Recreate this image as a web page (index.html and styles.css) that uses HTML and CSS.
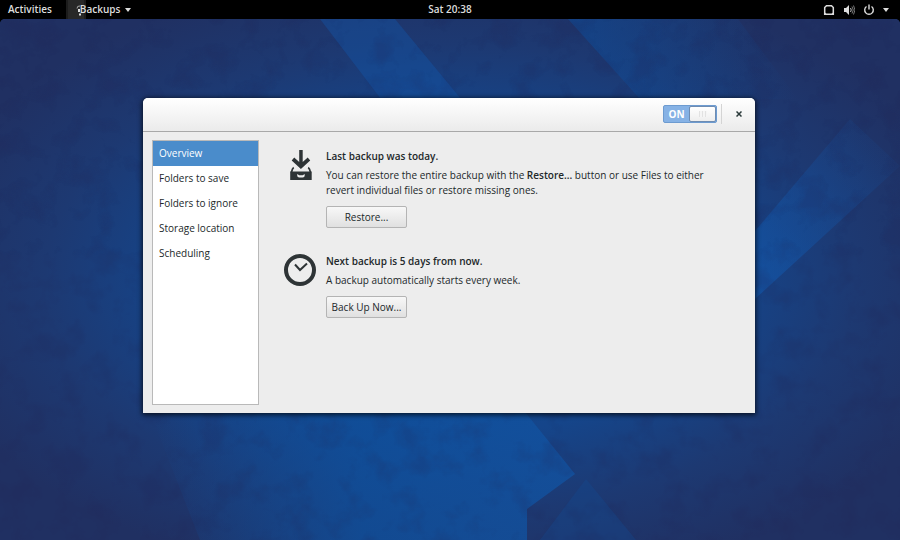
FILE: index.html
```html
<!DOCTYPE html>
<html lang="en">
<head>
    <meta charset="UTF-8">
    <meta name="viewport" content="width=device-width, initial-scale=1.0">
    <title>Backups</title>
    <link rel="stylesheet" href="styles.css">
</head>
<body>
    <header class="topbar">
        <div class="topbar-left">
            <button type="button" class="activities">Activities</button>
            <button type="button" class="app-menu">
                <svg class="app-icon" viewBox="0 0 20 19" aria-hidden="true">
                    <path d="M0 0h20v19H0z" fill="#1c1c1c"/>
                    <path d="M2 0h16v19H2z" fill="#282828"/>
                    <path d="M11 8.500q0-3 3-2.500" fill="none" stroke="#aaa" stroke-width="1"/>
                    <path d="M13 9v3M13 14.500h2" stroke="#ddd" stroke-width="2"/>
                </svg>
                <span class="app-name">Backups</span>
                <svg class="arrow" viewBox="0 0 6 4" aria-hidden="true"><path d="M0 0h6L3 4z" fill="#ddd"/></svg>
            </button>
        </div>
        <time class="clock">Sat 20:38</time>
        <button type="button" class="status" aria-label="System menu">
            <svg class="status-icon" viewBox="0 0 12 12" aria-hidden="true">
                <path d="M3.500 1.700h5l1.800 1.800v6.800H1.700V3.500z" fill="none" stroke="#ddd" stroke-width="1.500"/>
                <path d="M1 11V7.500L4.500 11zM11 11V7.500L7.500 11z" fill="#ddd"/>
            </svg>
            <svg class="status-icon" viewBox="0 0 12 12" aria-hidden="true">
                <path d="M1 4h2l3-3v10L3 8H1z" fill="#ddd"/>
                <path d="M7.500 4q1.500 2 0 4" fill="none" stroke="#bbb"/>
                <path d="M9 2.500q2.500 3.500 0 7M10.500 1.500q3 4.500 0 9" fill="none" stroke="#777"/>
            </svg>
            <svg class="status-icon" viewBox="0 0 12 12" aria-hidden="true">
                <path d="M3.500 2.500a4.300 4.300 0 1 0 5 0M6 .5v5" fill="none" stroke="#ddd" stroke-width="1.400"/>
            </svg>
            <svg class="arrow" viewBox="0 0 6 4" aria-hidden="true"><path d="M0 0h6L3 4z" fill="#ddd"/></svg>
        </button>
    </header>

    <main class="desktop">
        <svg class="wallpaper" viewBox="0 0 900 521" preserveAspectRatio="none" aria-hidden="true">
            <defs>
                <radialGradient id="glow" cx="0.5" cy="0.5" r="0.6">
                    <stop offset="0" stop-color="#104c98"/>
                    <stop offset="0.5" stop-color="#15458a"/>
                    <stop offset="0.75" stop-color="#1d3972"/>
                    <stop offset="1" stop-color="#203062"/>
                </radialGradient>
                <linearGradient id="beam" x1="0" y1="1" x2="1" y2="0">
                    <stop offset="0" stop-color="#1258ad" stop-opacity="0.9"/>
                    <stop offset="1" stop-color="#1258ad" stop-opacity="0"/>
                </linearGradient>
                <linearGradient id="base" x1="0" y1="0" x2="1" y2="0">
                    <stop offset="0" stop-color="#0f4f9b" stop-opacity="0"/>
                    <stop offset="0.5" stop-color="#0f4f9b"/>
                    <stop offset="1" stop-color="#1252a0"/>
                </linearGradient>
                <linearGradient id="edge" x1="0" y1="0" x2="1" y2="0">
                    <stop offset="0" stop-color="#0f4c98"/>
                    <stop offset="1" stop-color="#0f4c98" stop-opacity="0"/>
                </linearGradient>
                <filter id="grain" x="0" y="0" width="100%" height="100%" color-interpolation-filters="sRGB">
                    <feTurbulence type="fractalNoise" baseFrequency="0.035" numOctaves="5" seed="8"/>
                    <feColorMatrix values="0 0 0 0 0.13  0 0 0 0 0.13  0 0 0 0 0.32  3.500 0 0 0 -1.700"/>
                </filter>
            </defs>
            <path d="M0 0h900v521H0z" fill="url(#glow)"/>
            <path d="M320 0h75l66 80h-80z" fill="#1258ad" opacity="0.400"/>
            <path d="M568 0h170l60 80H640z" fill="url(#edge)" opacity="0.600"/>
            <path d="M755 212l95-112 50 47-145 133z" fill="url(#beam)" opacity="0.700"/>
            <path d="M150 393h375l50 62-48 35v31H200z" fill="url(#base)" opacity="0.800"/>
            <path d="M586 460l50 61H540z" fill="#15488f" opacity="0.400"/>
            <path d="M0 0h900v521H0z" filter="url(#grain)" opacity="0.160"/>
        </svg>

        <section class="window" aria-label="Backups">
            <div class="titlebar">
                <label class="switch">
                    <input type="checkbox" class="switch-input" aria-label="Automatic backups" checked>
                    <span class="switch-text">ON</span>
                    <span class="switch-knob"></span>
                </label>
                <span class="divider"></span>
                <button type="button" class="close" aria-label="Close">
                    <svg class="close-icon" viewBox="0 0 6 6" aria-hidden="true"><path d="M.5.5l5 5M5.500.5l-5 5" stroke="#2b3a3a" stroke-width="1.500"/></svg>
                </button>
            </div>

            <div class="content">
                <nav class="sidebar">
                    <a href="#overview" class="item selected">Overview</a>
                    <a href="#save" class="item">Folders to save</a>
                    <a href="#ignore" class="item">Folders to ignore</a>
                    <a href="#storage" class="item">Storage location</a>
                    <a href="#scheduling" class="item">Scheduling</a>
                </nav>

                <div class="overview" id="overview">
                    <div class="row">
                        <svg class="row-icon" viewBox="0 0 34 34" aria-hidden="true">
                            <path d="M16.200 1h3.500v12l5-4.500 2.500 3-9.300 8.500-9.200-8.500 2.500-3 5 4.500z" fill="#2e3436"/>
                            <path d="M10.700 18.500q-1.500 1-2.300 5M25.200 18.500q1.500 1 2.300 5" fill="none" stroke="#2e3436" stroke-width="1.700"/>
                            <path d="M7.200 22.500h21.500v8.500h-21.500z" fill="#2e3436"/>
                            <path d="M14.200 25v1.500q0 2 2 2h3.500q2 0 2-2V25l-2 1.300h-3.500z" fill="#ededed"/>
                        </svg>
                        <div class="row-body">
                            <h2>Last backup was today.</h2>
                            <p>You can restore the entire backup with the <b>Restore...</b> button or use Files to either revert individual files or restore missing ones.</p>
                            <button type="button" class="btn">Restore...</button>
                        </div>
                    </div>
                    <div class="row">
                        <svg class="row-icon" viewBox="0 0 34 34" aria-hidden="true">
                            <circle cx="17" cy="16" r="14" fill="none" stroke="#2e3436" stroke-width="4"/>
                            <path d="M12 10.500l5 5.500 7-6.500" fill="none" stroke="#2e3436" stroke-width="2"/>
                        </svg>
                        <div class="row-body">
                            <h2>Next backup is 5 days from now.</h2>
                            <p>A backup automatically starts every week.</p>
                            <button type="button" class="btn">Back Up Now...</button>
                        </div>
                    </div>
                </div>
            </div>
        </section>
    </main>
</body>
</html>
```
FILE: styles.css
```css
* {
    box-sizing: border-box;
}
body {
    margin: 0;
    min-height: 100vh;
    display: flex;
    flex-direction: column;
    background-color: #000;
    font-family: "Open Sans", "Noto Sans", sans-serif;
    font-size: 10px;
    line-height: 15px;
    color: #22282a;
}
button {
    font: inherit;
    color: inherit;
    border: none;
    background: none;
    padding: 0;
}

/* top panel */
.topbar {
    display: grid;
    grid-template-columns: 1fr auto 1fr;
    align-items: center;
    height: 19px;
    background-color: #000;
    color: #ddd;
    font-weight: 600;
}
.topbar-left {
    display: flex;
    align-items: center;
    gap: 14px;
    padding-left: 8px;
}
.app-menu {
    display: flex;
    align-items: center;
}
.app-icon {
    width: 20px;
    height: 19px;
    margin-right: -6px;
}
.app-name {
    position: relative;
    margin-right: 5px;
}
.arrow {
    width: 6px;
    height: 4px;
}
.status {
    display: flex;
    align-items: center;
    justify-self: end;
    gap: 8px;
    padding-right: 11px;
}
.status-icon {
    width: 12px;
    height: 12px;
}

/* desktop */
.desktop {
    position: relative;
    flex: 1;
    padding: 79px 145px 79px 143px;
    overflow: hidden;
    border-radius: 5px 5px 0 0;
    background-color: #1b3b78;
}
.wallpaper {
    position: absolute;
    top: 0;
    left: 0;
    width: 100%;
    height: 100%;
}
.window {
    position: relative;
    border-radius: 5px 5px 0 0;
    background-color: #ededed;
    box-shadow: 0 1px 5px 1px rgba(0,0,0,0.7);
}
.titlebar {
    display: flex;
    align-items: center;
    justify-content: flex-end;
    height: 34px;
    padding: 0 13px 1px 0;
    border-bottom: 1px solid #a8a8a8;
    border-radius: 5px 5px 0 0;
    background: linear-gradient(#fff, #ebebeb);
}
.switch {
    position: relative;
    display: flex;
    width: 54px;
    height: 18px;
    border: 1px solid #6d9bd0;
    border-radius: 2px;
    background-color: #86b2e5;
}
.switch-input {
    position: absolute;
    inset: 0;
    margin: 0;
    opacity: 0;
}
.switch-text {
    flex: 1;
    text-align: center;
    line-height: 17px;
    font-weight: bold;
    color: #fff;
}
.switch-knob {
    width: 27px;
    border: 1px solid #6e8cb2;
    border-radius: 2px;
    background: repeating-linear-gradient(90deg, #e2e2e2 0 1px, #f5f5f5 1px 3px) center / 8px 6px no-repeat, linear-gradient(#fff, #eee);
}
.divider {
    width: 1px;
    height: 20px;
    margin: 0 14px 0 4px;
    background-color: #d4d4d4;
}
.close {
    display: flex;
}
.close-icon {
    width: 6px;
    height: 6px;
}

/* window content */
.content {
    display: flex;
    gap: 24px;
    padding: 8px 9px;
}
.sidebar {
    flex: none;
    width: 107px;
    min-height: 265px;
    border: 1px solid #b9b9b9;
    background-color: #fff;
}
.item {
    display: block;
    padding: 5px 6px;
    color: inherit;
    text-decoration: none;
}
.selected {
    background-color: #4a8ccb;
    color: #fff;
}
.overview {
    display: flex;
    flex-direction: column;
    gap: 26px;
    padding: 9px 38px 0 0;
}
.row {
    display: flex;
    gap: 9px;
}
.row-icon {
    flex: none;
    width: 34px;
    height: 34px;
}
h2 {
    margin: 0 0 4px;
    font-size: inherit;
    font-weight: 600;
}
b {
    font-weight: 600;
}
p {
    margin: 0 0 8px;
}
.btn {
    min-width: 81px;
    height: 22px;
    padding: 0 4px;
    border: 1px solid #b4b4b4;
    border-radius: 2px;
    background: linear-gradient(#f8f8f8, #e0e0e0);
}
```
